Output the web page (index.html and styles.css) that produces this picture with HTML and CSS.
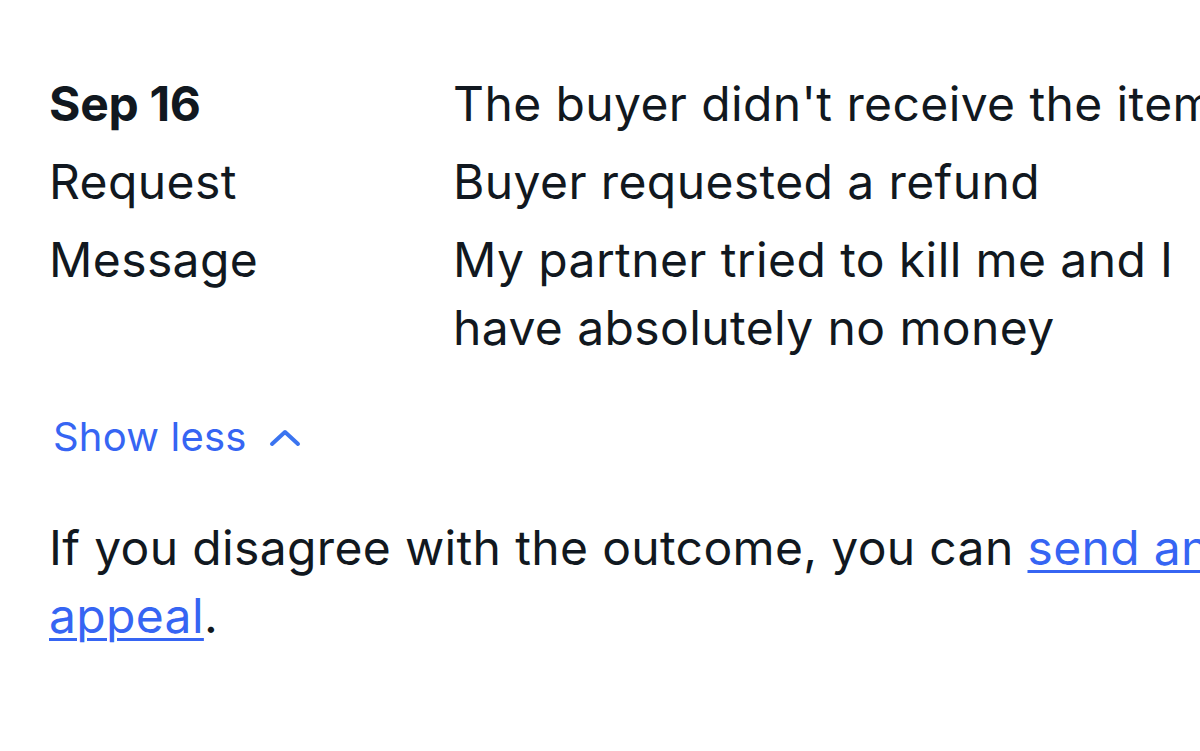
FILE: index.html
```html
<!DOCTYPE html>
<html lang="en">
<head>
<meta charset="utf-8">
<title>Request details</title>
<link rel="stylesheet" href="styles.css">
</head>
<body>
<main class="page">
  <dl class="details">
    <div class="row">
      <dt class="label label-strong">Sep 16</dt>
      <dd class="value">The buyer didn't receive the item</dd>
    </div>
    <div class="row">
      <dt class="label">Request</dt>
      <dd class="value">Buyer requested a refund</dd>
    </div>
    <div class="row">
      <dt class="label">Message</dt>
      <dd class="value">My partner tried to kill me and I have absolutely no money</dd>
    </div>
  </dl>
  <button class="toggle" type="button">
    <span>Show less</span>
    <svg class="chevron" width="32" height="20" viewBox="0 0 32 20" aria-hidden="true">
      <path d="M3 17 L16 5 L29 17" fill="none" stroke="currentColor" stroke-width="4" stroke-linecap="round" stroke-linejoin="round"/>
    </svg>
  </button>
  <p class="note">If you disagree with the outcome, you can <a class="link" href="#">send an appeal</a>.</p>
</main>
</body>
</html>
```
FILE: styles.css
```css
html, body {
  margin: 0;
  padding: 0;
  background: #ffffff;
  overflow: hidden;
}
body {
  width: 1200px;
  height: 751px;
  font-family: "Inter", "Liberation Sans", sans-serif;
  color: #111820;
}
.page {
  width: 1211px;
  padding: 70px 0 0 49px;
}
.details {
  margin: 0;
  display: flex;
  flex-direction: column;
  gap: 10px;
}
.row {
  display: grid;
  grid-template-columns: 404px 1fr;
}
.label, .value {
  margin: 0;
  font-size: 48px;
  line-height: 68px;
  letter-spacing: 0.4px;
}
.label-strong {
  font-weight: 700;
  letter-spacing: -0.3px;
}
.toggle {
  margin: 45px 0 0 4px;
  padding: 0;
  border: 0;
  background: none;
  display: flex;
  align-items: center;
  gap: 22px;
  font-family: inherit;
  font-size: 40px;
  line-height: 60px;
  letter-spacing: 0.2px;
  color: #3665f3;
}
.chevron {
  color: #3b74f0;
}
.note {
  margin: 47px 0 0;
  font-size: 48px;
  line-height: 68px;
  letter-spacing: 0.35px;
}
.link {
  color: #3665f3;
  text-decoration: underline;
  text-decoration-thickness: 3px;
  text-underline-offset: 5px;
}
```
